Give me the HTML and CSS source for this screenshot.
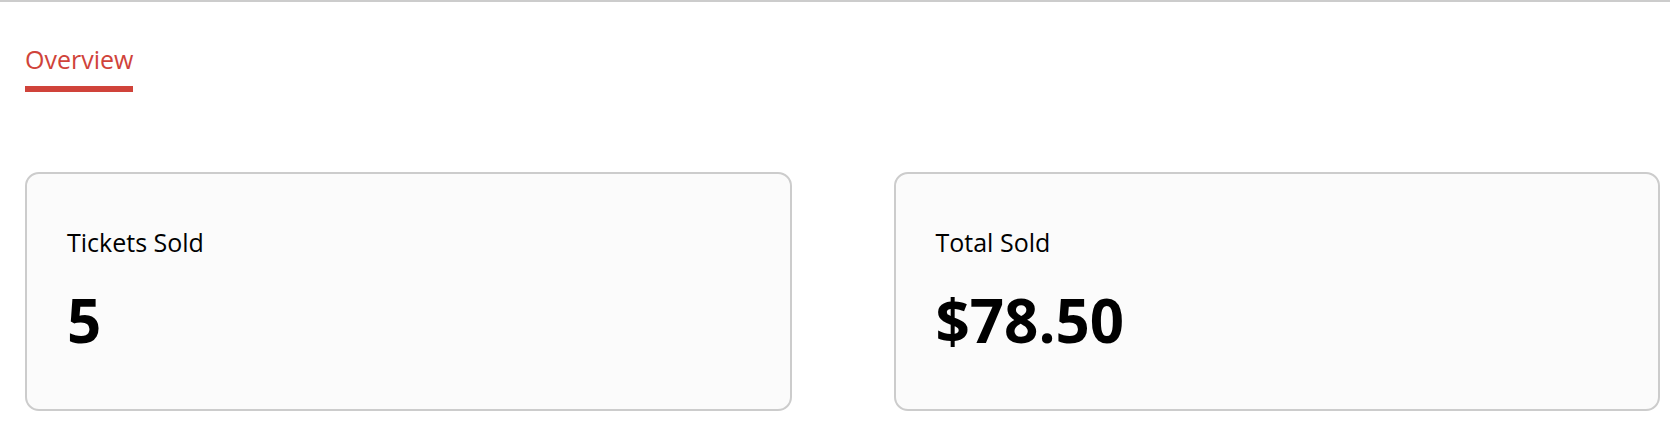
FILE: index.html
```html
<!DOCTYPE html>
<html lang="en">
<head>
<meta charset="utf-8">
<title>Overview</title>
<link rel="stylesheet" href="styles.css">
</head>
<body>
<div class="page">
  <nav class="tabs">
    <div class="tab tab-active">Overview</div>
  </nav>
  <section class="stats">
    <div class="card">
      <div class="card-label">Tickets Sold</div>
      <div class="card-value">5</div>
    </div>
    <div class="card">
      <div class="card-label">Total Sold</div>
      <div class="card-value">$78.50</div>
    </div>
  </section>
</div>
</body>
</html>
```
FILE: styles.css
```css
html, body {
  margin: 0;
  padding: 0;
  background: #ffffff;
}
body {
  font-family: "Open Sans", "Noto Sans", "Liberation Sans", sans-serif;
  color: #000;
}
.page {
  border-top: 2px solid #cccccc;
  padding: 0 10px 0 25px;
}
.tabs {
  display: flex;
  padding-top: 40px;
}
.tab {
  font-size: 25px;
  line-height: 34px;
  color: #d0433a;
  padding-bottom: 10px;
  border-bottom: 6px solid #d0433a;
}
.stats {
  display: grid;
  grid-template-columns: 1fr 1fr;
  column-gap: 102px;
  margin-top: 80px;
}
.card {
  height: 239px;
  border: 2px solid #cccccc;
  border-radius: 14px;
  background: #fbfbfb;
  padding: 51px 40px 0 40px;
  box-sizing: border-box;
}
.card-label {
  font-size: 25px;
  line-height: 34px;
}
.card-value {
  font-size: 60px;
  font-weight: 700;
  line-height: 82px;
  margin-top: 20px;
}
```
